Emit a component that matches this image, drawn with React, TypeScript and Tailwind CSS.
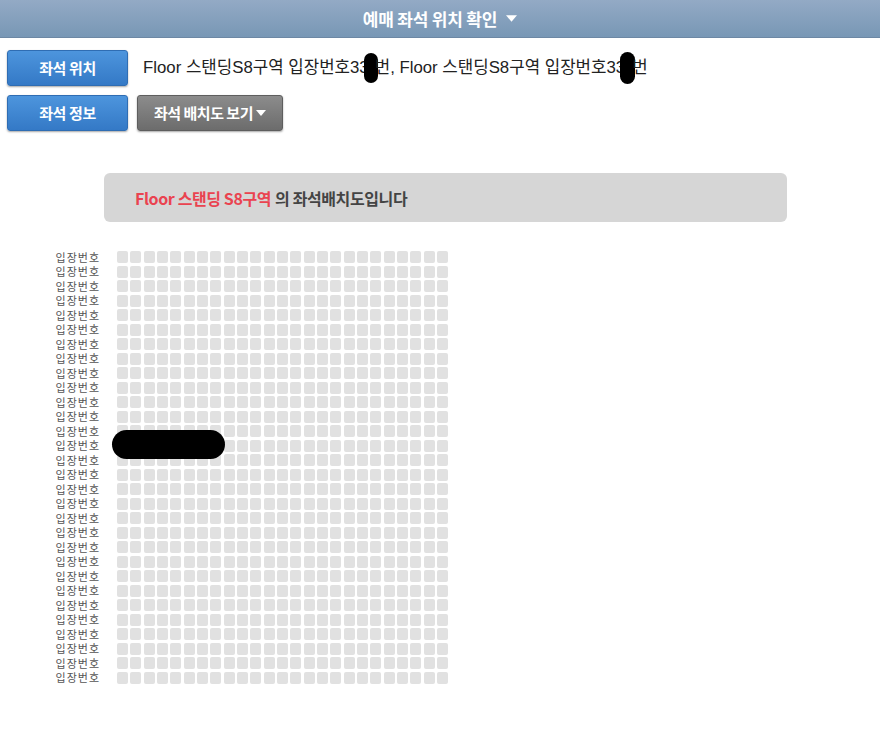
import React from "react";

const KR = { fontFamily: '"Noto Sans CJK KR", "Noto Sans", sans-serif' };
const MIX = { fontFamily: '"Liberation Sans", "Noto Sans CJK KR", sans-serif' };

const ROWS = 30;
const COLS = 25;

const Caret = ({ className }: { className?: string }) => (
  <svg viewBox="0 0 10 6" className={className} fill="currentColor">
    <path d="M0 0h10L5 6z" />
  </svg>
);

const Redact = ({ className }: { className: string }) => (
  <span className={`inline-block bg-black rounded-full align-middle ${className}`} />
);

export default function App() {
  return (
    <div className="w-[880px] h-[750px] bg-white text-[#222]" style={KR}>
      {/* Header */}
      <div className="h-[38px] bg-gradient-to-b from-[#93aac5] to-[#7897b5] border-b border-[#6d88a4] flex items-center justify-center gap-[9px]">
        <span className="text-white font-bold text-[17px] tracking-[-0.2px]">예매 좌석 위치 확인</span>
        <Caret className="w-[11px] h-[7px] text-white" />
      </div>

      {/* Buttons */}
      <div className="pl-[7px] pt-[12px] flex flex-col gap-[9px]">
        <div className="flex items-center gap-[15px]">
          <button className="w-[121px] h-[36px] rounded-[3px] bg-gradient-to-b from-[#4d95dd] to-[#3479c6] border border-[#2f6db3] shadow-[0_1px_2px_rgba(0,0,0,0.35)] text-white font-bold text-[15px] tracking-[-0.4px]">
            좌석 위치
          </button>
          <div className="flex items-center text-[16.8px] text-[#222]" style={MIX}>
            <span>Floor 스탠딩S8구역 입장번호33</span>
            <Redact className="w-[14px] h-[30px] -ml-[5px] -mr-[3px]" />
            <span>번, Floor 스탠딩S8구역 입장번호33</span>
            <Redact className="w-[15px] h-[32px] -ml-[5px] -mr-[3px]" />
            <span>번</span>
          </div>
        </div>
        <div className="flex items-center gap-[9px]">
          <button className="w-[121px] h-[36px] rounded-[3px] bg-gradient-to-b from-[#4d95dd] to-[#3479c6] border border-[#2f6db3] shadow-[0_1px_2px_rgba(0,0,0,0.35)] text-white font-bold text-[15px] tracking-[-0.4px]">
            좌석 정보
          </button>
          <button className="w-[146px] h-[36px] rounded-[3px] bg-gradient-to-b from-[#8c8c8c] to-[#6c6c6c] border border-[#5e5e5e] shadow-[0_1px_2px_rgba(0,0,0,0.35)] text-white font-bold text-[15px] tracking-[-0.5px] flex items-center justify-center gap-[3px]">
            좌석 배치도 보기
            <Caret className="w-[10px] h-[6px] text-white" />
          </button>
        </div>
      </div>

      {/* Banner */}
      <div className="ml-[104px] mt-[42px] w-[683px] h-[49px] rounded-[6px] bg-[#d6d6d6] flex items-center pl-[31px] text-[16px] font-bold tracking-[-0.4px]">
        <span className="text-[#ea4350]">Floor 스탠딩 S8구역</span>
        <span className="text-[#444] ml-[4px]">의 좌석배치도입니다</span>
      </div>

      {/* Seat map */}
      <div className="relative mt-[29px] flex flex-col gap-[2.5px]">
        {Array.from({ length: ROWS }).map((_, r) => (
          <div key={r} className="flex items-center h-[12px]">
            <span className="w-[100px] text-right text-[11px] leading-none tracking-[1px] text-[#555]">
              입장번호
            </span>
            <div className="ml-[17px] flex gap-[2.33px]">
              {Array.from({ length: COLS }).map((_, c) => (
                <span key={c} className="w-[11px] h-[12px] rounded-[2px] bg-[#e1e1e1]" />
              ))}
            </div>
          </div>
        ))}
        <span className="absolute left-[112px] top-[179px] w-[113px] h-[29px] rounded-full bg-black" />
      </div>
    </div>
  );
}
